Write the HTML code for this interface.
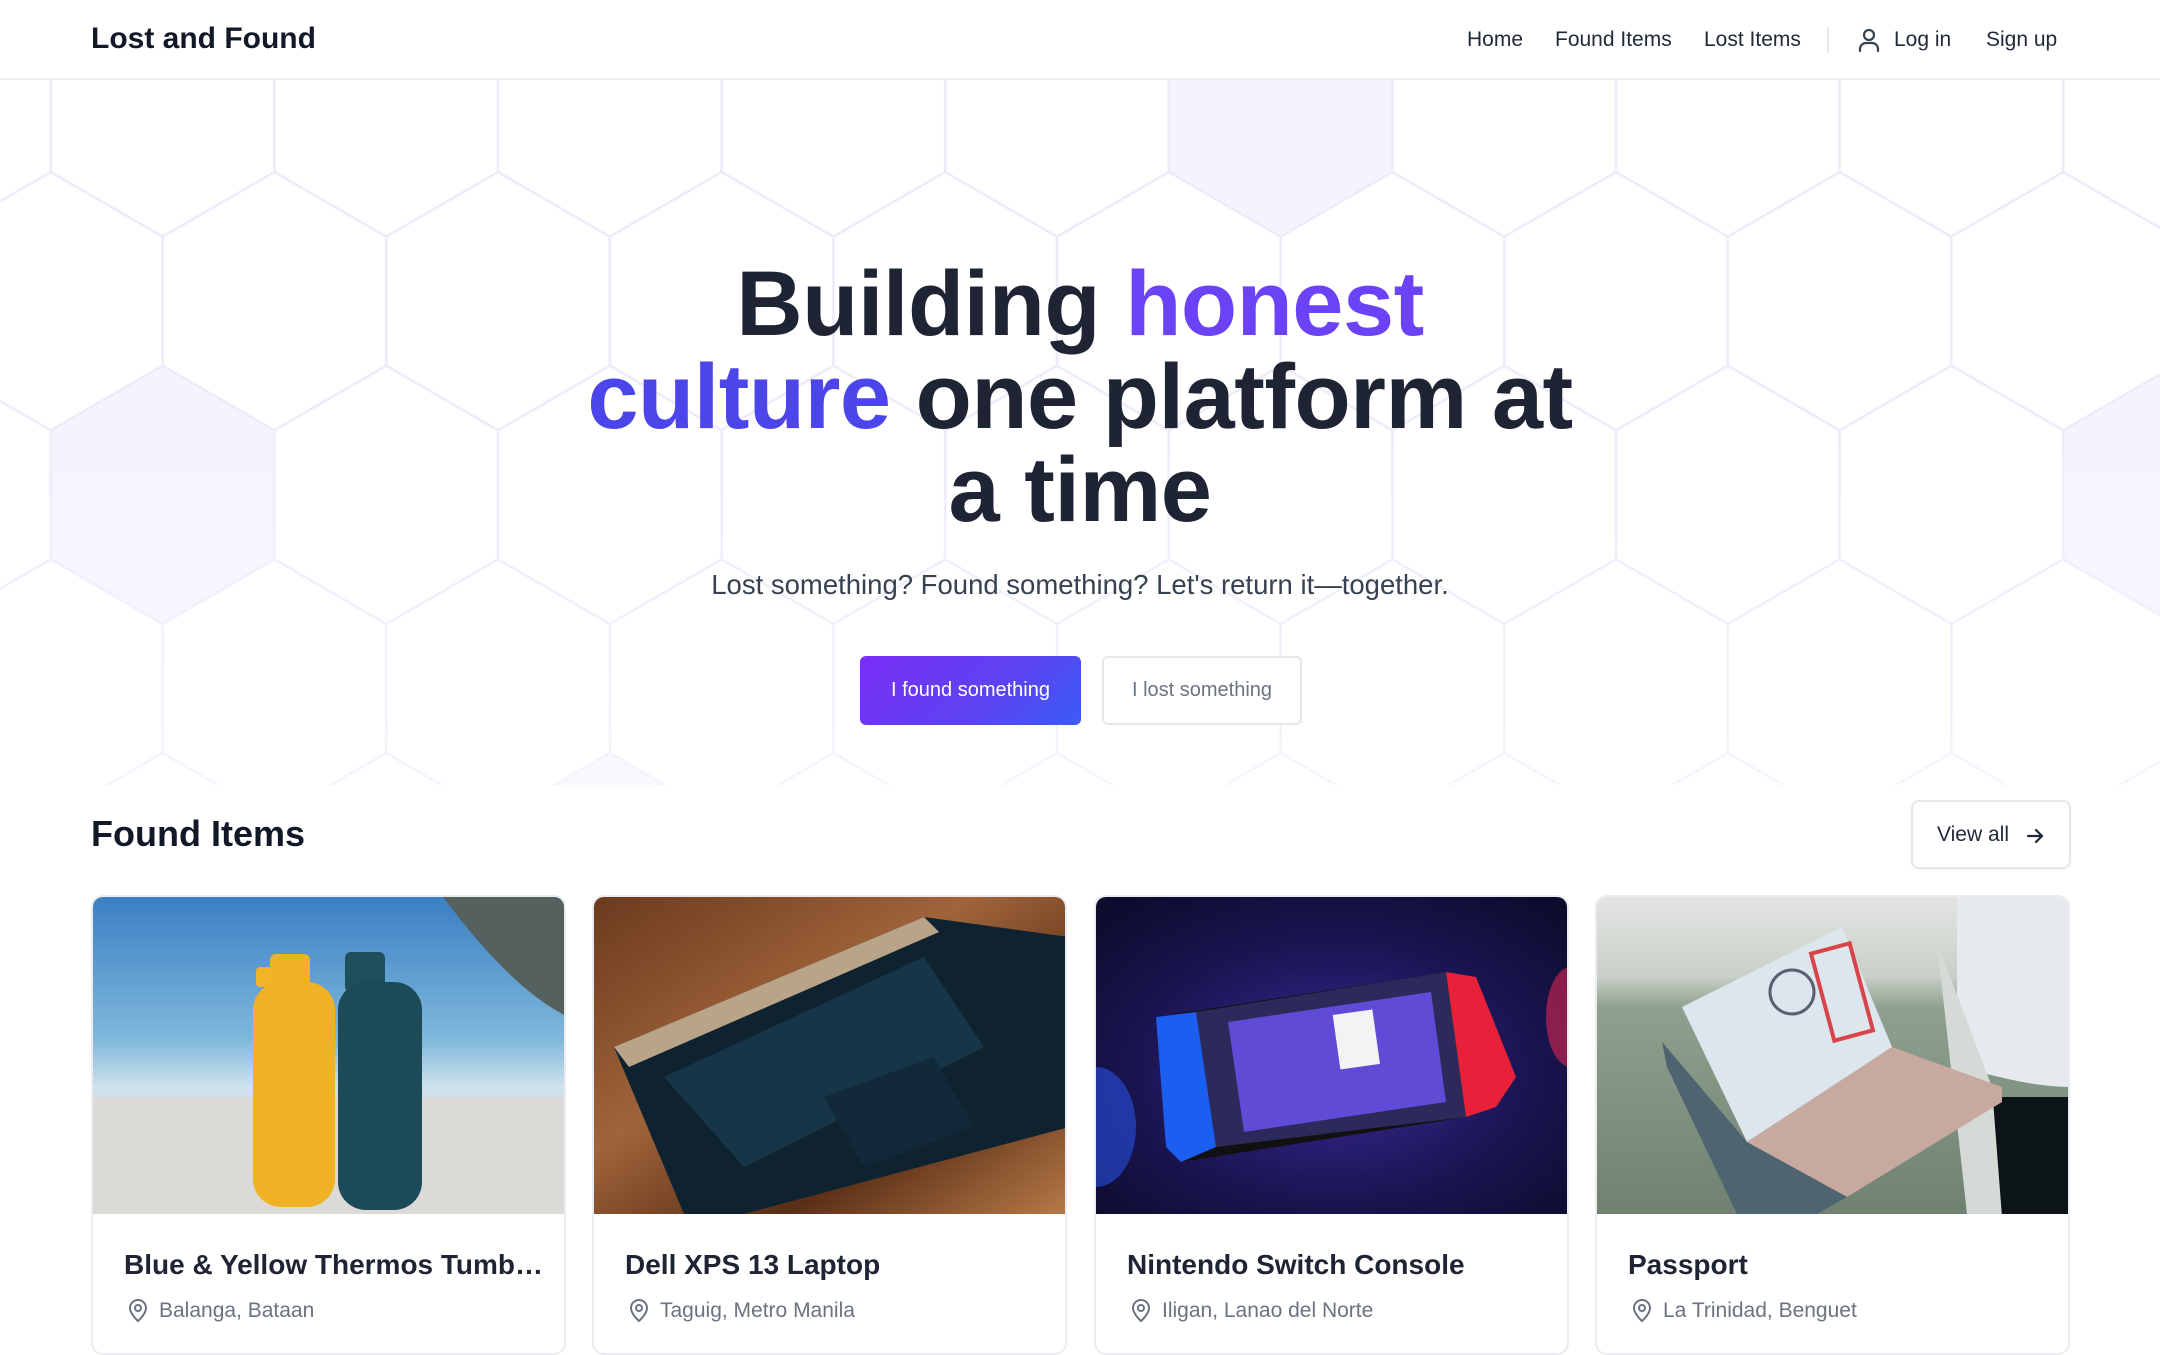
<!DOCTYPE html>
<html><head><meta charset="utf-8">
<style>
*{box-sizing:border-box;margin:0;padding:0}
body{width:2160px;height:1320px;overflow:hidden;background:#fff;font-family:"Liberation Sans",Arial,sans-serif;color:#1f2937;position:relative}
.nav{position:absolute;left:0;top:0;width:2160px;height:80px;border-bottom:2px solid #ececf0;background:#fff;z-index:2}
.logo{position:absolute;left:91px;top:22px;font-size:30px;font-weight:700;color:#111827}
.nl{position:absolute;top:28px;font-size:21px;color:#1f2937}
.sep{position:absolute;left:1827px;top:27px;width:2px;height:26px;background:#e5e7eb}
.hero{position:absolute;left:0;top:80px;width:2160px;height:705px;overflow:hidden}
h1{position:absolute;left:0;width:2160px;top:178px;text-align:center;font-size:92px;line-height:93px;font-weight:700;color:#1e2433;letter-spacing:-0.5px}
.g1{color:#6c42f7}.g2{color:#4b45ea}
.sub{position:absolute;left:0;width:2160px;top:489px;text-align:center;font-size:27.5px;color:#374151}
.b1{position:absolute;left:860px;top:576px;width:221px;height:69px;border-radius:6px;background:linear-gradient(135deg,#7b2ff7,#5b43f0 60%,#3a5cf6);color:#fff;font-size:20px;text-align:center;line-height:69px}
.b2{position:absolute;left:1102px;top:576px;width:200px;height:69px;border-radius:6px;border:2px solid #e5e7eb;background:#fff;color:#6b7280;font-size:20px;text-align:center;line-height:65px}
.h2{position:absolute;left:91px;top:813px;font-size:36px;font-weight:700;color:#111827}
.va{position:absolute;left:1911px;top:800px;width:160px;height:69px;border:2px solid #e5e7eb;border-radius:8px;font-size:21px;line-height:65px;padding-left:24px;color:#1f2937;box-shadow:0 1px 2px rgba(0,0,0,.05)}
.card{position:absolute;top:895px;width:475px;height:460px;border:2px solid #ececf0;border-radius:12px;overflow:hidden;background:#fff}
.card svg{display:block}
.ct{position:absolute;left:31px;top:352px;font-size:28px;font-weight:700;color:#1e2433;white-space:nowrap}
.cl{position:absolute;left:66px;top:402px;font-size:21px;color:#6b7280}
.pin{position:absolute;left:34px;top:402px}
</style></head><body>
<div class="nav">
<div class="logo">Lost and Found</div>
<div class="nl" style="left:1467px">Home</div>
<div class="nl" style="left:1555px">Found Items</div>
<div class="nl" style="left:1704px">Lost Items</div>
<div class="sep"></div>
<svg style="position:absolute;left:1858px;top:28px" width="22" height="24" viewBox="0 0 22 24" fill="none" stroke="#374151" stroke-width="2.2" stroke-linecap="round"><circle cx="11" cy="7" r="5"/><path d="M2 23v-2a6 6 0 0 1 6-6h6a6 6 0 0 1 6 6v2"/></svg>
<div class="nl" style="left:1894px">Log in</div>
<div class="nl" style="left:1986px">Sign up</div>
</div>

<div class="hero">
<svg width="2160" height="785" style="position:absolute;left:0;top:-80px" viewBox="0 0 2160 785">
<defs>
<pattern id="hx" patternUnits="userSpaceOnUse" x="162.6" y="107.5" width="223.6" height="387.3">
<path d="M111.8 0V64.55L223.6 129.1V258.2L111.8 322.75L0 258.2V129.1L111.8 64.55M111.8 322.75V387.3" fill="none" stroke="#ecebfa" stroke-width="2.5"/>
</pattern>
<linearGradient id="fd" x1="0" y1="0" x2="0" y2="1"><stop offset="0.55" stop-color="#fff" stop-opacity="0"/><stop offset="1" stop-color="#fff" stop-opacity="0.45"/></linearGradient>
</defs>
<g fill="#f5f3fe">
<polygon points="1280.6,-21.6 1392.4,43 1392.4,172 1280.6,236.6 1168.8,172 1168.8,43"/>
<polygon points="162.6,365.6 274.4,430.2 274.4,559.2 162.6,623.8 50.8,559.2 50.8,430.2"/>
<polygon points="2174.8,365.6 2286.6,430.2 2286.6,559.2 2174.8,623.8 2063,559.2 2063,430.2"/>
<polygon points="609.8,752.8 721.6,817.4 721.6,946.4 609.8,1011 498,946.4 498,817.4"/>
</g>
<rect width="2160" height="785" fill="url(#hx)"/>
<rect width="2160" height="785" fill="url(#fd)"/>
</svg>
<h1>Building <span class="g1">honest</span><br><span class="g2">culture</span> one platform at<br>a time</h1>
<div class="sub">Lost something? Found something? Let's return it—together.</div>
<div class="b1">I found something</div>
<div class="b2">I lost something</div>
</div>

<div class="h2">Found Items</div>
<div class="va">View all <svg style="position:absolute;left:112px;top:24px" width="20" height="20" viewBox="0 0 20 20" fill="none" stroke="#1f2937" stroke-width="2.2" stroke-linecap="round" stroke-linejoin="round"><path d="M3 10h14M11 4l6 6-6 6"/></svg></div>

<div class="card" style="left:91px">
<svg width="475" height="317" viewBox="0 0 475 317">
<defs><linearGradient id="p1" x1="0" y1="0" x2="0" y2="1"><stop offset="0" stop-color="#3b7fc4"/><stop offset="0.45" stop-color="#7fb8dc"/><stop offset="0.6" stop-color="#cfe2ec"/><stop offset="1" stop-color="#d8d6d2"/></linearGradient></defs>
<rect width="475" height="317" fill="url(#p1)"/>
<rect x="0" y="200" width="475" height="117" fill="#dcdad6"/>
<path d="M350 0h125v120c-40-20-80-60-125-120z" fill="#55615e"/>
<rect x="163" y="70" width="22" height="20" rx="4" fill="#f0b429"/>
<rect x="160" y="85" width="82" height="225" rx="28" fill="#efb225"/>
<rect x="177" y="57" width="40" height="40" rx="6" fill="#efb225"/>
<rect x="252" y="55" width="40" height="40" rx="6" fill="#1f4e5c"/>
<rect x="245" y="85" width="84" height="228" rx="28" fill="#1d4a58"/>
</svg>
<div class="ct">Blue &amp; Yellow Thermos Tumb…</div>
<svg class="pin" width="22" height="24" viewBox="0 0 22 24" fill="none" stroke="#6b7280" stroke-width="2"><path d="M11 22s8-7 8-13a8 8 0 0 0-16 0c0 6 8 13 8 13z"/><circle cx="11" cy="9" r="3"/></svg>
<div class="cl">Balanga, Bataan</div>
</div>

<div class="card" style="left:592px">
<svg width="475" height="317" viewBox="0 0 475 317">
<defs><linearGradient id="w" x1="0" y1="0" x2="1" y2="1"><stop offset="0" stop-color="#6b3a1e"/><stop offset="0.4" stop-color="#a0643a"/><stop offset="0.7" stop-color="#5a2e16"/><stop offset="1" stop-color="#b77a48"/></linearGradient></defs>
<rect width="475" height="317" fill="url(#w)"/>
<path d="M20 150L330 20 475 40 475 230 150 317 90 317z" fill="#0f2230"/>
<path d="M20 150L330 20 345 35 35 170z" fill="#b9a488"/>
<path d="M70 180L330 60 390 150 150 270z" fill="#173548"/>
<path d="M230 200L340 160 380 230 270 270z" fill="#12293a"/>
</svg>
<div class="ct">Dell XPS 13 Laptop</div>
<svg class="pin" width="22" height="24" viewBox="0 0 22 24" fill="none" stroke="#6b7280" stroke-width="2"><path d="M11 22s8-7 8-13a8 8 0 0 0-16 0c0 6 8 13 8 13z"/><circle cx="11" cy="9" r="3"/></svg>
<div class="cl">Taguig, Metro Manila</div>
</div>

<div class="card" style="left:1094px">
<svg width="475" height="317" viewBox="0 0 475 317">
<defs><radialGradient id="sw" cx="0.5" cy="0.55" r="0.7"><stop offset="0" stop-color="#3a2a9a"/><stop offset="0.6" stop-color="#1a1450"/><stop offset="1" stop-color="#0c0c2c"/></radialGradient></defs>
<rect width="475" height="317" fill="url(#sw)"/>
<ellipse cx="0" cy="230" rx="40" ry="60" fill="#2a5bff" opacity="0.5"/>
<ellipse cx="475" cy="120" rx="25" ry="50" fill="#ff2a55" opacity="0.5"/>
<path d="M60 120L350 75 370 220 85 265z" fill="#111"/>
<path d="M100 115L350 75 370 220 120 250z" fill="#2b2a5a"/>
<path d="M132 125L335 95 350 205 148 235z" fill="#5f4bd6"/>
<path d="M60 120L100 115 120 250 85 265 70 250z" fill="#1b5ff0"/>
<path d="M350 75L380 80 420 180 400 210 370 220z" fill="#e8213a"/>
<rect x="240" y="115" width="40" height="55" fill="#f3f3f3" transform="rotate(-8 260 140)"/>
</svg>
<div class="ct">Nintendo Switch Console</div>
<svg class="pin" width="22" height="24" viewBox="0 0 22 24" fill="none" stroke="#6b7280" stroke-width="2"><path d="M11 22s8-7 8-13a8 8 0 0 0-16 0c0 6 8 13 8 13z"/><circle cx="11" cy="9" r="3"/></svg>
<div class="cl">Iligan, Lanao del Norte</div>
</div>

<div class="card" style="left:1595px">
<svg width="475" height="317" viewBox="0 0 475 317">
<defs><linearGradient id="ps" x1="0" y1="0" x2="0" y2="1"><stop offset="0" stop-color="#e2e4e2"/><stop offset="0.25" stop-color="#c9d0c8"/><stop offset="0.35" stop-color="#8ea08e"/><stop offset="1" stop-color="#6f8170"/></linearGradient></defs>
<rect width="475" height="317" fill="url(#ps)"/>
<path d="M360 0h115v190c-40 0-70-10-115-20z" fill="#e6eaee"/>
<rect x="390" y="200" width="85" height="117" fill="#0c1418"/>
<path d="M340 45L395 190 405 320 370 317z" fill="#d6dad6"/>
<path d="M85 110L245 30 295 150 150 245z" fill="#dde6ec"/>
<path d="M150 245L295 150 405 190 405 205 250 300z" fill="#c7a9a0"/>
<path d="M65 145L150 245 250 300 220 317 140 317 70 170z" fill="#4e6470"/>
<circle cx="195" cy="95" r="22" fill="none" stroke="#5a6070" stroke-width="3"/>
<rect x="225" y="50" width="40" height="90" fill="none" stroke="#d9434a" stroke-width="4" transform="rotate(-15 245 95)"/>
</svg>
<div class="ct">Passport</div>
<svg class="pin" width="22" height="24" viewBox="0 0 22 24" fill="none" stroke="#6b7280" stroke-width="2"><path d="M11 22s8-7 8-13a8 8 0 0 0-16 0c0 6 8 13 8 13z"/><circle cx="11" cy="9" r="3"/></svg>
<div class="cl">La Trinidad, Benguet</div>
</div>
</body></html>
